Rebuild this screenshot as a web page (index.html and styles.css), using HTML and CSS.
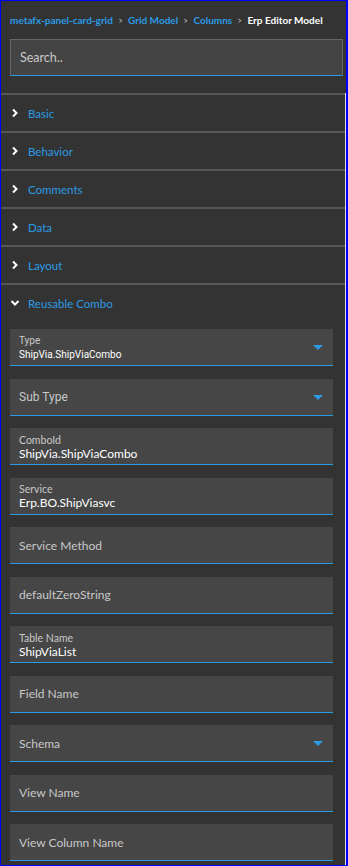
FILE: index.html
```html
<!DOCTYPE html>
<html lang="en">
<head>
    <meta charset="UTF-8">
    <meta name="viewport" content="width=device-width, initial-scale=1.0">
    <title>Erp Editor Model</title>
    <link rel="stylesheet" href="styles.css">
</head>
<body>
    <div class="frame">
        <div class="crumbs">
            <a class="crumb">metafx-panel-card-grid</a>
            <span class="sep">&gt;</span>
            <a class="crumb">Grid Model</a>
            <span class="sep">&gt;</span>
            <a class="crumb">Columns</a>
            <span class="sep">&gt;</span>
            <span class="crumb current">Erp Editor Model</span>
        </div>

        <div class="search">
            <input type="text" placeholder="Search..">
        </div>

        <div class="sections">
            <div class="section">
                <div class="section-head">
                    <svg class="chev" width="8" height="10" viewBox="0 0 8 10"><polyline points="2,1.5 5.5,5 2,8.5" /></svg>
                    <span>Basic</span>
                </div>
            </div>
            <div class="section">
                <div class="section-head">
                    <svg class="chev" width="8" height="10" viewBox="0 0 8 10"><polyline points="2,1.5 5.5,5 2,8.5" /></svg>
                    <span>Behavior</span>
                </div>
            </div>
            <div class="section">
                <div class="section-head">
                    <svg class="chev" width="8" height="10" viewBox="0 0 8 10"><polyline points="2,1.5 5.5,5 2,8.5" /></svg>
                    <span>Comments</span>
                </div>
            </div>
            <div class="section">
                <div class="section-head">
                    <svg class="chev" width="8" height="10" viewBox="0 0 8 10"><polyline points="2,1.5 5.5,5 2,8.5" /></svg>
                    <span>Data</span>
                </div>
            </div>
            <div class="section">
                <div class="section-head">
                    <svg class="chev" width="8" height="10" viewBox="0 0 8 10"><polyline points="2,1.5 5.5,5 2,8.5" /></svg>
                    <span>Layout</span>
                </div>
            </div>
            <div class="section open">
                <div class="section-head">
                    <svg class="chev" width="10" height="10" viewBox="0 0 10 10"><polyline points="1.5,3 5,6.5 8.5,3" /></svg>
                    <span>Reusable Combo</span>
                </div>

                <div class="fields">
                    <div class="field select roboto">
                        <div class="field-label">Type</div>
                        <div class="field-value">ShipVia.ShipViaCombo</div>
                        <span class="arrow"></span>
                    </div>
                    <div class="field select roboto">
                        <div class="field-empty">Sub Type</div>
                        <span class="arrow"></span>
                    </div>
                    <div class="field">
                        <div class="field-label">ComboId</div>
                        <div class="field-value">ShipVia.ShipViaCombo</div>
                    </div>
                    <div class="field">
                        <div class="field-label">Service</div>
                        <div class="field-value">Erp.BO.ShipViasvc</div>
                    </div>
                    <div class="field">
                        <div class="field-empty">Service Method</div>
                    </div>
                    <div class="field">
                        <div class="field-empty">defaultZeroString</div>
                    </div>
                    <div class="field">
                        <div class="field-label">Table Name</div>
                        <div class="field-value">ShipViaList</div>
                    </div>
                    <div class="field">
                        <div class="field-empty">Field Name</div>
                    </div>
                    <div class="field select">
                        <div class="field-empty">Schema</div>
                        <span class="arrow"></span>
                    </div>
                    <div class="field">
                        <div class="field-empty">View Name</div>
                    </div>
                    <div class="field">
                        <div class="field-empty">View Column Name</div>
                    </div>
                </div>
            </div>
        </div>
    </div>
</body>
</html>
```

FILE: styles.css
```css
html, body {
    margin: 0;
    padding: 0;
}
body {
    font-family: Lato, "Noto Sans", sans-serif;
    background-color: #333333;
    color: #ddd;
}
.frame {
    box-sizing: border-box;
    width: 348px;
    height: 866px;
    border: 1px solid #0000ff;
    border-right-width: 2px;
    overflow: hidden;
}
.crumbs {
    height: 38px;
    padding-left: 9px;
    display: flex;
    align-items: center;
    gap: 5px;
    font-size: 10px;
    font-weight: 700;
    white-space: nowrap;
}
.crumb {
    color: #2b9be4;
}
.crumb.current {
    color: #ffffff;
}
.sep {
    color: #ccc;
    font-size: 9px;
    font-weight: 400;
    transform: scaleX(0.8);
}
.search {
    margin: 0 3px 0 9px;
}
.search input {
    box-sizing: border-box;
    display: block;
    width: 100%;
    height: 37px;
    background-color: #444444;
    border: 1px solid #666666;
    border-bottom: 1px solid #2b9be4;
    padding: 0 9px;
    font-family: inherit;
    font-size: 12.5px;
    color: #ddd;
    outline: none;
}
.search input::placeholder {
    color: #c8c8c8;
}
.sections {
    margin-top: 17px;
    border-right: 1px solid #e0e0e0;
    height: 800px;
}
.section {
    border-top: 2px solid #575757;
}
.section-head {
    height: 36px;
    display: flex;
    align-items: center;
    padding-left: 10px;
    gap: 9px;
    color: #2b9be4;
    font-size: 11.5px;
}
.chev {
    fill: none;
    stroke: #ffffff;
    stroke-width: 2;
}
.section.open .section-head {
    padding-left: 9px;
    gap: 8px;
}
.fields {
    padding: 8px 12px 0 9px;
}
.field {
    position: relative;
    box-sizing: border-box;
    height: 37px;
    margin-bottom: 12.5px;
    background-color: #464646;
    border-bottom: 1px solid #2b9be4;
    padding: 0 9px;
    display: flex;
    flex-direction: column;
    justify-content: center;
}
.field-label {
    font-size: 10.5px;
    color: #c8c8c8;
    line-height: 12px;
    margin-top: 2px;
}
.field-value {
    font-size: 12px;
    color: #ffffff;
    line-height: 15px;
}
.field-empty {
    font-size: 12px;
    color: #c8c8c8;
}
.roboto {
    font-family: Roboto, sans-serif;
}
.roboto .field-label {
    font-size: 10px;
}
.roboto .field-value {
    font-size: 10px;
}
.roboto .field-empty {
    font-size: 12px;
}
.arrow {
    position: absolute;
    right: 10px;
    top: 16px;
    width: 0;
    height: 0;
    border-left: 5px solid transparent;
    border-right: 5px solid transparent;
    border-top: 5px solid #2b9be4;
}
```
